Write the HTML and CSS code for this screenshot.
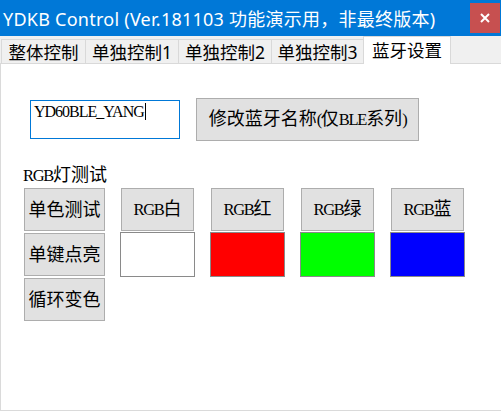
FILE: index.html
```html
<!DOCTYPE html>
<html lang="zh-CN">
<head>
<meta charset="utf-8">
<title>YDKB Control</title>
<link rel="stylesheet" href="styles.css">
</head>
<body>
<div class="window">
  <header class="titlebar">
    <span class="title">YDKB Control (Ver.181103 功能演示用，非最终版本)</span>
    <button class="close" aria-label="关闭">
      <svg width="10" height="10" viewBox="0 0 10 10"><path d="M1 1 L9 9 M9 1 L1 9" stroke="#fff" stroke-width="2" fill="none"/></svg>
    </button>
  </header>
  <nav class="tabs">
    <div class="tab w84">整体控制</div>
    <div class="tab w93">单独控制1</div>
    <div class="tab w93">单独控制2</div>
    <div class="tab w92">单独控制3</div>
    <div class="tab active">蓝牙设置</div>
  </nav>
  <main class="panel">
    <div class="name-row">
      <div class="textbox"><span class="lat">YD60BLE_YANG</span><span class="caret"></span></div>
      <button class="btn rename">修改蓝牙名称<span class="lat">(</span>仅<span class="lat">BLE</span>系列<span class="lat">)</span></button>
    </div>
    <div class="section-label"><span class="lat">RGB</span>灯测试</div>
    <div class="rgb">
      <div class="modes">
        <button class="btn mode">单色测试</button>
        <button class="btn mode">单键点亮</button>
        <button class="btn mode">循环变色</button>
      </div>
      <div class="color-col">
        <button class="btn color-btn"><span class="lat">RGB</span>白</button>
        <div class="swatch white"></div>
      </div>
      <div class="color-col">
        <button class="btn color-btn"><span class="lat">RGB</span>红</button>
        <div class="swatch red"></div>
      </div>
      <div class="color-col">
        <button class="btn color-btn"><span class="lat">RGB</span>绿</button>
        <div class="swatch green"></div>
      </div>
      <div class="color-col">
        <button class="btn color-btn"><span class="lat">RGB</span>蓝</button>
        <div class="swatch blue"></div>
      </div>
    </div>
  </main>
</div>
</body>
</html>
```
FILE: styles.css
```css
html, body {
  margin: 0;
  padding: 0;
  background: #ffffff;
}
body {
  width: 501px;
  height: 412px;
  overflow: hidden;
}
.window {
  display: flex;
  flex-direction: column;
  width: 501px;
}
.titlebar {
  display: flex;
  justify-content: space-between;
  align-items: flex-start;
  height: 36px;
  background: #0078d7;
}
.title {
  color: #ffffff;
  font-family: "Noto Sans", "Noto Sans CJK SC", sans-serif;
  font-size: 18px;
  letter-spacing: 0.25px;
  line-height: 24px;
  padding: 7px 0 0 3px;
  white-space: nowrap;
}
.close {
  margin: 3px 1px 0 0;
  width: 30px;
  height: 30px;
  border: 0;
  padding: 0;
  background: #c75050;
  display: flex;
  align-items: center;
  justify-content: center;
}
.close svg { display: block; }

.tabs {
  display: flex;
  align-items: flex-end;
  height: 27px;
  background: #f0f0f0;
  border-bottom: 1px solid #d9d9d9;
  padding-left: 1px;
  font-family: "Noto Sans", "Noto Sans CJK SC", sans-serif;
  font-size: 17.5px;
  color: #000;
}
.tab {
  box-sizing: border-box;
  height: 24px;
  border: 1px solid #d9d9d9;
  border-bottom: 0;
  border-right: 0;
  background: #f0f0f0;
  display: flex;
  align-items: center;
  justify-content: center;
  line-height: 20px;
  padding-top: 1px;
  white-space: nowrap;
}
.w84 { width: 84px; }
.w93 { width: 93px; }
.w92 { width: 92px; }
.tab.active {
  width: 88px;
  height: 28px;
  margin-bottom: -1px;
  background: #ffffff;
  border-right: 1px solid #d9d9d9;
  position: relative;
  padding-top: 0;
  padding-bottom: 2px;
}

.panel {
  box-sizing: border-box;
  height: 347px;
  border-left: 1px solid #dadada;
  border-bottom: 1px solid #dadada;
  padding: 34px 0 0 22px;
  font-family: "Liberation Serif", "Noto Sans CJK SC", serif;
  font-size: 18px;
  color: #000;
}
.lat {
  font-family: "Liberation Serif", serif;
  font-size: 16.5px;
  letter-spacing: -1.3px;
}
.name-row {
  display: flex;
  align-items: center;
  gap: 16px;
  padding-left: 7px;
  height: 43px;
}
.textbox {
  box-sizing: border-box;
  width: 150px;
  height: 39px;
  border: 1px solid #0078d7;
  padding: 2px 0 0 3px;
  line-height: 18px;
  display: flex;
  align-items: flex-start;
}
.textbox .lat {
  font-size: 16px;
  letter-spacing: -1px;
}
.caret {
  display: inline-block;
  width: 1px;
  height: 17px;
  background: #000;
  margin-left: 1px;
  margin-top: 0;
}
.btn {
  box-sizing: border-box;
  border: 1px solid #adadad;
  background: #e1e1e1;
  color: #000;
  font-family: "Liberation Serif", "Noto Sans CJK SC", serif;
  font-size: 18px;
  line-height: 22px;
  padding: 0;
  margin: 0;
  white-space: nowrap;
}
.rename {
  width: 223px;
  height: 43px;
}
.section-label {
  margin-top: 24px;
  line-height: 20px;
  height: 20px;
}
.rgb {
  display: flex;
  gap: 15px;
  margin-top: 3px;
  padding-left: 1px;
}
.modes {
  display: flex;
  flex-direction: column;
  gap: 2px;
}
.mode {
  width: 81px;
  height: 43px;
}
.color-col {
  display: flex;
  flex-direction: column;
  width: 75px;
}
.color-btn {
  width: 73px;
  height: 43px;
  margin: 0 1px;
}
.swatch {
  box-sizing: border-box;
  width: 75px;
  height: 45px;
  margin-top: 1px;
  border: 1px solid #8a8a8a;
}
.white { background: #ffffff; }
.red { background: #ff0000; }
.green { background: #00ff00; }
.blue { background: #0000ff; }
```
